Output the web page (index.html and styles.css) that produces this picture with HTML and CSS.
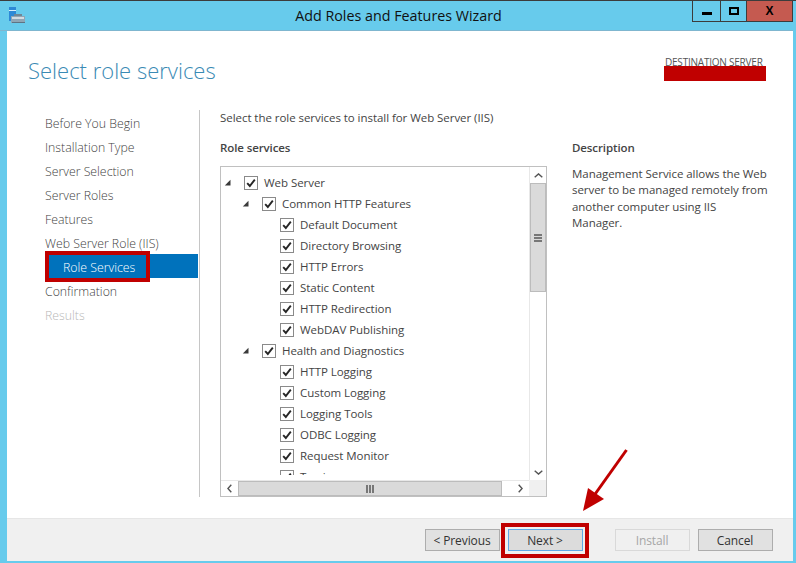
FILE: index.html
```html
<!DOCTYPE html>
<html lang="en">
<head>
<meta charset="utf-8">
<title>Add Roles and Features Wizard</title>
<link rel="stylesheet" href="styles.css">
</head>
<body>
<svg class="defs" width="0" height="0" aria-hidden="true">
  <symbol id="chk" viewBox="0 0 14 14">
    <rect x="0.5" y="0.5" width="13" height="13" fill="#fff" stroke="#8a8a8a"/>
    <path d="M3.2 7.2 L5.8 10 L10.8 3.6" fill="none" stroke="#262626" stroke-width="1.9"/>
  </symbol>
  <symbol id="tri" viewBox="0 0 7 7">
    <path d="M6.5 0.8 V6.5 H0.8 Z" fill="#3a3a3a"/>
  </symbol>
</svg>
<div class="window">
  <header class="titlebar">
    <svg class="appicon" width="16" height="16" viewBox="0 0 16 16">
      <rect x="0" y="0" width="7" height="14" fill="#2d89d6"/>
      <rect x="0" y="3" width="7" height="1" fill="#d7effa"/>
      <path d="M2 14 V9 H16 V16 H2 Z" fill="#8fa6b5"/>
      <rect x="3" y="10" width="12" height="2" fill="#d3dce2"/>
      <rect x="5" y="7" width="8" height="2" fill="#6f8797"/>
      <rect x="3" y="15" width="13" height="1" fill="#5e7484"/>
    </svg>
    <div class="wintitle">Add Roles and Features Wizard</div>
    <div class="controls">
      <div class="ctl ctl-min"><span class="glyph-min"></span></div>
      <div class="ctl ctl-max"><span class="glyph-max"></span></div>
      <div class="ctl ctl-close"><span class="glyph-close">X</span></div>
    </div>
  </header>
  <div class="client">
    <div class="pagehead">
      <h1>Select role services</h1>
      <div class="dest"><span>DESTINATION SERVER</span><i class="redact"></i></div>
    </div>
    <div class="body">
      <nav class="steps">
        <div class="step">Before You Begin</div>
        <div class="step">Installation Type</div>
        <div class="step">Server Selection</div>
        <div class="step">Server Roles</div>
        <div class="step">Features</div>
        <div class="step">Web Server Role (IIS)</div>
        <div class="step step-active"><span>Role Services</span><i class="callout-nav"></i></div>
        <div class="step">Confirmation</div>
        <div class="step step-off">Results</div>
      </nav>
      <main class="pane">
        <p class="intro">Select the role services to install for Web Server (IIS)</p>
        <div class="columns">
          <section class="services">
            <h2>Role services</h2>
            <div class="tree">
              <div class="rows">
                <div class="row l0"><svg class="tri"><use href="#tri"/></svg><svg class="chk"><use href="#chk"/></svg>Web Server</div>
                <div class="row l1"><svg class="tri"><use href="#tri"/></svg><svg class="chk"><use href="#chk"/></svg>Common HTTP Features</div>
                <div class="row l2"><svg class="chk"><use href="#chk"/></svg>Default Document</div>
                <div class="row l2"><svg class="chk"><use href="#chk"/></svg>Directory Browsing</div>
                <div class="row l2"><svg class="chk"><use href="#chk"/></svg>HTTP Errors</div>
                <div class="row l2"><svg class="chk"><use href="#chk"/></svg>Static Content</div>
                <div class="row l2"><svg class="chk"><use href="#chk"/></svg>HTTP Redirection</div>
                <div class="row l2"><svg class="chk"><use href="#chk"/></svg>WebDAV Publishing</div>
                <div class="row l1"><svg class="tri"><use href="#tri"/></svg><svg class="chk"><use href="#chk"/></svg>Health and Diagnostics</div>
                <div class="row l2"><svg class="chk"><use href="#chk"/></svg>HTTP Logging</div>
                <div class="row l2"><svg class="chk"><use href="#chk"/></svg>Custom Logging</div>
                <div class="row l2"><svg class="chk"><use href="#chk"/></svg>Logging Tools</div>
                <div class="row l2"><svg class="chk"><use href="#chk"/></svg>ODBC Logging</div>
                <div class="row l2"><svg class="chk"><use href="#chk"/></svg>Request Monitor</div>
                <div class="row l2"><svg class="chk"><use href="#chk"/></svg>Tracing</div>
              </div>
              <div class="vscroll">
                <div class="sbtn"><svg width="9" height="5" viewBox="0 0 9 5"><path d="M0.7 4.3 L4.5 0.9 L8.3 4.3" fill="none" stroke="#555" stroke-width="1.4"/></svg></div>
                <div class="vthumb"><span class="grip-h"></span></div>
                <div class="vtrack"></div>
                <div class="sbtn"><svg width="9" height="5" viewBox="0 0 9 5"><path d="M0.7 0.7 L4.5 4.1 L8.3 0.7" fill="none" stroke="#555" stroke-width="1.4"/></svg></div>
              </div>
              <div class="hscroll">
                <div class="sbtn hbtn"><svg width="5" height="9" viewBox="0 0 5 9"><path d="M4.3 0.7 L0.9 4.5 L4.3 8.3" fill="none" stroke="#555" stroke-width="1.4"/></svg></div>
                <div class="hthumb"><span class="grip-v"></span></div>
                <div class="htrack"></div>
                <div class="sbtn hbtn"><svg width="5" height="9" viewBox="0 0 5 9"><path d="M0.7 0.7 L4.1 4.5 L0.7 8.3" fill="none" stroke="#555" stroke-width="1.4"/></svg></div>
              </div>
              <div class="corner"></div>
            </div>
          </section>
          <aside class="desc">
            <h2>Description</h2>
            <p>Management Service allows the Web server to be managed remotely from another computer using IIS<br>Manager.</p>
          </aside>
        </div>
      </main>
    </div>
    <footer class="footer">
      <button class="btn" type="button">&lt; Previous</button>
      <button class="btn btn-next" type="button">Next &gt;<i class="callout-next"></i></button>
      <button class="btn btn-off btn-install" type="button">Install</button>
      <button class="btn" type="button">Cancel</button>
    </footer>
  </div>
  <svg class="arrow" width="50" height="66" viewBox="0 0 50 66">
    <path d="M46.5 1 L13 48" fill="none" stroke="#c00000" stroke-width="3"/>
    <path d="M3 62 L8 39 L24 50 Z" fill="#c00000"/>
  </svg>
</div>
</body>
</html>
```
FILE: styles.css
```css
* { box-sizing: border-box; }
html, body { margin: 0; padding: 0; }
body { font-family: "Open Sans", "Noto Sans", sans-serif; font-size: 11.5px; letter-spacing: -0.05px; color: #444; background: #67cbec; }
.defs { position: absolute; }

.window { position: relative; width: 796px; height: 563px; display: flex; flex-direction: column; background: #67cbec; border-top: 1px solid #3c3c3c; padding: 0 3px 2px 7px; overflow: hidden; }

.titlebar { height: 30px; flex: none; display: flex; position: relative; margin-left: -7px; border-bottom: 1px solid #7fb6cf; }
.appicon { position: absolute; left: 9px; top: 6px; }
.wintitle { flex: 1; text-align: center; font-size: 14.3px; letter-spacing: 0; line-height: 30px; color: #111; padding-left: 4px; }
.controls { position: absolute; right: 0; top: 0; display: flex; height: 21px; border: 1px solid #3c3c3c; border-top: 0; width: 101px; }
.ctl { display: flex; align-items: center; justify-content: center; }
.ctl-min { width: 28px; border-right: 1px solid #3c3c3c; }
.ctl-max { width: 26px; border-right: 1px solid #3c3c3c; }
.ctl-close { flex: 1; background: #c55a50; }
.glyph-min { width: 10px; height: 3px; background: #000; margin-top: 5px; }
.glyph-max { width: 10px; height: 8px; border: 2px solid #000; }
.glyph-close { font-family: "Liberation Sans", sans-serif; font-weight: 700; font-size: 12px; line-height: 12px; color: #000; }

.client { flex: 1; display: flex; flex-direction: column; background: #fff; min-height: 0; }

.pagehead { height: 79px; flex: none; display: flex; justify-content: space-between; padding: 20px 27px 0 21px; }
h1 { margin: 0; font-weight: 300; font-size: 22px; letter-spacing: 0; line-height: 38px; color: #3a8ab4; }
.dest { position: relative; width: 102px; margin-top: 5px; font-size: 10px; line-height: 12px; color: #555; white-space: nowrap; padding-left: 1px; letter-spacing: -0.22px; }
.redact { position: absolute; left: 0; top: 10px; width: 102px; height: 15px; background: #c00000; }

.body { flex: none; height: 387px; display: flex; }
.steps { margin-left: 38px; width: 155px; border-right: 1px solid #c6c6c6; padding-right: 1px; flex: none; }
.step { height: 24px; line-height: 27px; color: #3f3f3f; white-space: nowrap; font-size: 12.3px; letter-spacing: 0; font-weight: 300; }
.step-active { position: relative; background: #0072bc; color: #fff; padding-left: 18px; }
.step-off { color: #b8b8b8; }
.callout-nav { position: absolute; left: 0; top: -3px; width: 105px; height: 31px; border: 4px solid #c00000; }

.pane { margin-left: 20px; flex: none; display: flex; flex-direction: column; }
.intro { margin: 0; line-height: 16px; height: 30px; color: #444; white-space: nowrap; }
.columns { display: flex; gap: 25px; }
h2 { margin: 0; font-size: 11.5px; font-weight: 600; letter-spacing: -0.1px; line-height: 16px; color: #444; height: 26px; }
.services { width: 327px; flex: none; }
.tree { width: 327px; height: 331px; border: 1px solid #c0c0c0; display: grid; grid-template-columns: 308px 17px; grid-template-rows: 313px 16px; background: #fff; }
.rows { overflow: hidden; margin-bottom: 5px; padding-top: 5px; }
.row { display: flex; align-items: center; height: 21px; white-space: nowrap; color: #444; }
.l0 { padding-left: 3px; }
.l1 { padding-left: 21px; }
.l2 { padding-left: 59px; }
.tri { width: 7px; height: 7px; margin-right: 13px; flex: none; }
.chk { width: 14px; height: 14px; margin-right: 6px; flex: none; }

.vscroll { display: flex; flex-direction: column; border-left: 1px solid #e8e8e8; }
.sbtn { flex: none; height: 16px; display: flex; align-items: center; justify-content: center; background: #fff; }
.vthumb { flex: none; height: 109px; background: #dadada; border: 1px solid #bcbcbc; display: flex; align-items: center; justify-content: center; }
.vtrack { flex: 1; background: #fff; }
.grip-h { width: 8px; height: 8px; border-top: 2px solid #777; border-bottom: 2px solid #777; background: linear-gradient(#777, #777) center / 100% 2px no-repeat; }

.hscroll { display: flex; border-top: 1px solid #e8e8e8; }
.hbtn { width: 17px; height: auto; }
.hthumb { flex: none; width: 264px; background: #dadada; border: 1px solid #bcbcbc; display: flex; align-items: center; justify-content: center; }
.htrack { flex: 1; background: #fff; }
.grip-v { width: 8px; height: 8px; border-left: 2px solid #777; border-right: 2px solid #777; background: linear-gradient(#777, #777) center / 2px 100% no-repeat; }
.corner { background: #f0f0f0; }

.desc { width: 199px; flex: none; }
.desc p { margin: 0; line-height: 16.33px; color: #444; }

.footer { flex: 1; margin-top: 21px; background: #f0f0f0; border-top: 1px solid #e6e6e6; display: flex; align-items: flex-start; padding: 10px 0 0 418px; }
.btn { position: relative; width: 75px; height: 22px; padding: 0 1px 0 0; border: 1px solid #adadad; background: #e1e1e1; font-family: inherit; font-size: 12px; letter-spacing: -0.1px; color: #333; margin-right: 8px; }
.btn-next { border-color: #5fa8e6; background: #dcdcdc; }
.btn-install { margin-left: 24px; }
.btn-off { background: #f0f0f0; border-color: #d9d9d9; color: #a6a6a6; }
.callout-next { position: absolute; left: -8px; top: -7px; width: 88px; height: 35px; border: 4px solid #c00000; }

.arrow { position: absolute; left: 580px; top: 448px; }
```
